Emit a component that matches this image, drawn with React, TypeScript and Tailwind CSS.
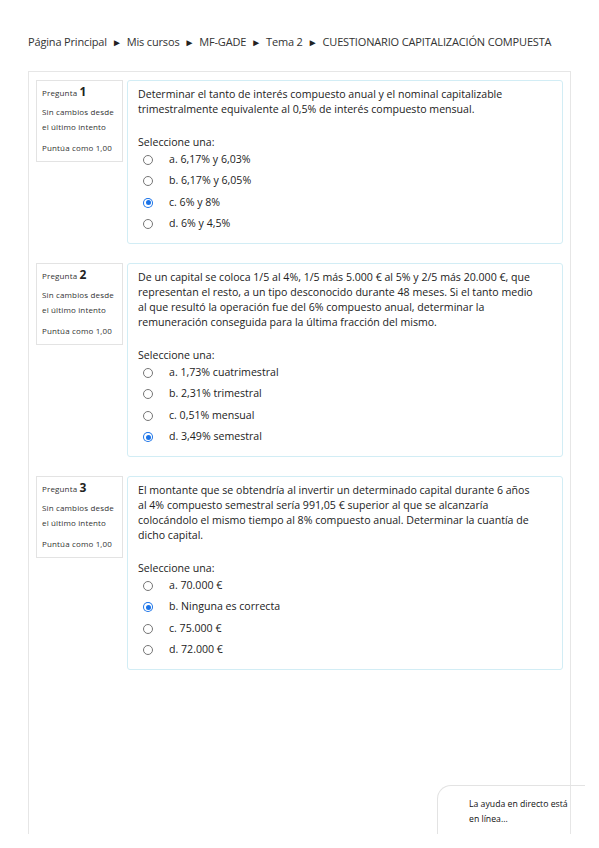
import React from 'react'

// Cuestionario de Moodle: revisión de intento (sin cambios desde el último intento)
interface Question {
  num: number
  text: string[]
  options: string[]
  selected: number
}

const QUESTIONS: Question[] = [
  {
    num: 1,
    text: [
      'Determinar el tanto de interés compuesto anual y el nominal capitalizable',
      'trimestralmente equivalente al 0,5% de interés compuesto mensual.',
    ],
    options: ['a. 6,17% y 6,03%', 'b. 6,17% y 6,05%', 'c. 6% y 8%', 'd. 6% y 4,5%'],
    selected: 2,
  },
  {
    num: 2,
    text: [
      'De un capital se coloca 1/5 al 4%, 1/5 más 5.000 € al 5% y 2/5 más 20.000 €, que',
      'representan el resto, a un tipo desconocido durante 48 meses. Si el tanto medio',
      'al que resultó la operación fue del 6% compuesto anual, determinar la',
      'remuneración conseguida para la última fracción del mismo.',
    ],
    options: ['a. 1,73% cuatrimestral', 'b. 2,31% trimestral', 'c. 0,51% mensual', 'd. 3,49% semestral'],
    selected: 3,
  },
  {
    num: 3,
    text: [
      'El montante que se obtendría al invertir un determinado capital durante 6 años',
      'al 4% compuesto semestral sería 991,05 € superior al que se alcanzaría',
      'colocándolo el mismo tiempo al 8% compuesto anual. Determinar la cuantía de',
      'dicho capital.',
    ],
    options: ['a. 70.000 €', 'b. Ninguna es correcta', 'c. 75.000 €', 'd. 72.000 €'],
    selected: 1,
  },
]

const CRUMBS = ['Página Principal', 'Mis cursos', 'MF-GADE', 'Tema 2', 'CUESTIONARIO CAPITALIZACIÓN COMPUESTA']

function Radio({ checked }: { checked: boolean }) {
  return checked ? (
    <span className="w-[10px] h-[10px] rounded-full bg-[#1a73e8] flex items-center justify-center shrink-0">
      <span className="w-[8px] h-[8px] rounded-full bg-white flex items-center justify-center">
        <span className="w-[5px] h-[5px] rounded-full bg-[#1a73e8]" />
      </span>
    </span>
  ) : (
    <span className="w-[10px] h-[10px] rounded-full border border-[#767676] bg-white shrink-0" />
  )
}

function QuestionBlock({ q }: { q: Question }) {
  return (
    <div className="flex gap-[4px] items-start">
      <div className="w-[87px] h-[82px] border border-[#e3e3e3] pl-[5px] pt-[3px] text-[8px] tracking-[0.15px] text-[#333] leading-[15px]">
        <div className="leading-[16px]">
          Pregunta <span className="text-[12px] font-bold text-[#222] tracking-normal">{q.num}</span>
        </div>
        <div className="mt-[3px]">Sin cambios desde</div>
        <div>el último intento</div>
        <div className="mt-[6px]">Puntúa como 1,00</div>
      </div>
      <div className="flex-1 border border-[#d2edf5] rounded-[3px] pl-[10px] pr-[8px] pt-[6px] pb-[8px] text-[10.6px] text-[#222]">
        <div className="leading-[15px]">
          {q.text.map((l, i) => (
            <div key={i}>{l}</div>
          ))}
        </div>
        <div className="mt-[18px] leading-[15px]">Seleccione una:</div>
        <div className="-mt-[1px]">
          {q.options.map((o, i) => (
            <div key={i} className="flex items-center h-[21.5px] pl-[5px]">
              <Radio checked={i === q.selected} />
              <span className="ml-[16px]">{o}</span>
            </div>
          ))}
        </div>
      </div>
    </div>
  )
}

export default function App() {
  return (
    <div className="relative w-[599px] h-[848px] bg-white overflow-hidden font-['Open_Sans',sans-serif]">
      <nav className="pt-[34px] pl-[28px] text-[11px] text-[#333] leading-[16px] tracking-[-0.16px] flex items-center">
        {CRUMBS.map((c, i) => (
          <span key={c} className="flex items-center">
            {i > 0 && <span className="mx-[5px] text-[10px] text-[#222]">►</span>}
            {c}
          </span>
        ))}
      </nav>
      <div className="ml-[28px] mt-[21px] w-[543px] h-[763px] border-l border-t border-r border-[#e6e6e6] px-[7px] pt-[8px] flex flex-col gap-[19px]">
        {QUESTIONS.map((q) => (
          <QuestionBlock key={q.num} q={q} />
        ))}
      </div>
      <div className="absolute left-[437px] top-[785px] w-[148px] h-[49px] border-l border-t border-[#e3e3e3] rounded-tl-[14px] pl-[31px] pt-[11px] text-[8.7px] leading-[15px] text-[#111]">
        <div>La ayuda en directo está</div>
        <div>en línea...</div>
      </div>
    </div>
  )
}
